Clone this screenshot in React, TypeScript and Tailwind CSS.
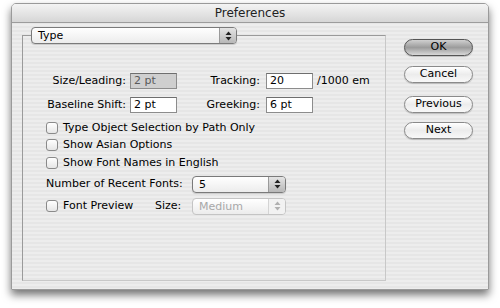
import React from "react";

function Arrows({ disabled }: { disabled?: boolean }) {
  const c = disabled ? "#b0b0b0" : "#222";
  return (
    <svg width="7" height="10" viewBox="0 0 7 10">
      <path d="M3.5 0.5 L6.5 4 L0.5 4 Z" fill={c} />
      <path d="M3.5 9.5 L6.5 6 L0.5 6 Z" fill={c} />
    </svg>
  );
}

function PopUp({ label, width, disabled }: { label: string; width: string; disabled?: boolean }) {
  return (
    <div
      className={`flex h-[17px] items-stretch rounded-[4px] border ${width} ${
        disabled ? "border-[#c4c4c4] text-[#a8a8a8]" : "border-[#7a7a7a] text-black shadow-[0_1px_1px_rgba(0,0,0,0.15)]"
      } bg-gradient-to-b from-white to-[#ececec]`}
    >
      <span className="flex-1 pl-[6px] leading-[15px]">{label}</span>
      <span
        className={`flex w-[17px] items-center justify-center rounded-r-[3px] border-l ${
          disabled ? "border-[#d4d4d4] bg-[#f2f2f2]" : "border-[#9a9a9a] bg-gradient-to-b from-[#e4e4e4] to-[#b8b8b8]"
        }`}
      >
        <Arrows disabled={disabled} />
      </span>
    </div>
  );
}

function Field({ value, width, disabled }: { value: string; width: string; disabled?: boolean }) {
  return (
    <div
      className={`h-[16px] ${width} border border-[#8c8c8c] border-t-[#6e6e6e] pl-[3px] leading-[14px] ${
        disabled ? "bg-[#cfcfcf] text-[#5a5a5a]" : "bg-white text-black"
      }`}
    >
      {value}
    </div>
  );
}

function Check({ label }: { label: string }) {
  return (
    <div className="flex h-[17.5px] items-center">
      <span className="h-[12px] w-[12px] rounded-[3px] border border-[#8a8a8a] bg-gradient-to-b from-white to-[#e6e6e6]" />
      <span className="ml-[5px]">{label}</span>
    </div>
  );
}

function Button({ label, primary }: { label: string; primary?: boolean }) {
  return (
    <div
      className={`flex h-[17px] w-[69px] items-center justify-center rounded-full border ${
        primary
          ? "border-[#555] bg-gradient-to-b from-[#d0d0d0] via-[#9c9c9c] to-[#d8d8d8]"
          : "border-[#8a8a8a] bg-gradient-to-b from-white via-[#ececec] to-[#f8f8f8]"
      } shadow-[0_1px_1px_rgba(0,0,0,0.2)]`}
    >
      {label}
    </div>
  );
}

export default function App() {
  return (
    <div className="h-[308px] w-[500px] overflow-hidden bg-white pl-[11px] pt-[3px] font-['DejaVu_Sans',sans-serif] text-[11px] text-black">
      <div className="flex h-[287px] w-[478px] flex-col overflow-hidden rounded-t-[5px] border border-[#9a9a9a] bg-[repeating-linear-gradient(180deg,#ededed_0px,#ededed_2px,#e6e6e6_2px,#e6e6e6_4px)] shadow-[0_5px_8px_rgba(0,0,0,0.55)]">
        {/* title bar */}
        <div className="flex h-[19px] shrink-0 items-center justify-center border-b border-[#9c9c9c] bg-gradient-to-b from-[#f4f4f4] to-[#d6d6d6] text-[12px] text-[#222]">
          Preferences
        </div>

        <div className="flex flex-1">
          {/* left group */}
          <div className="flex flex-col pl-[10px] pt-[4px]">
            <div className="relative z-10 ml-[9px]">
              <PopUp label="Type" width="w-[206px]" />
            </div>
            <div className="-mt-[9px] h-[246px] w-[364px] border border-[#9a9a9a] border-r-[#c8c8c8] border-b-[#c8c8c8] pt-[37px]">
              <div className="flex items-center">
                <span className="w-[103px] text-right">Size/Leading:</span>
                <span className="ml-[4px]">
                  <Field value="2 pt" width="w-[47px]" disabled />
                </span>
                <span className="w-[83px] text-right">Tracking:</span>
                <span className="ml-[6px]">
                  <Field value="20" width="w-[47px]" />
                </span>
                <span className="ml-[4px]">/1000 em</span>
              </div>
              <div className="mt-[7px] flex items-center">
                <span className="w-[103px] text-right">Baseline Shift:</span>
                <span className="ml-[4px]">
                  <Field value="2 pt" width="w-[47px]" />
                </span>
                <span className="w-[83px] text-right">Greeking:</span>
                <span className="ml-[6px]">
                  <Field value="6 pt" width="w-[47px]" />
                </span>
              </div>

              <div className="ml-[23px] mt-[6px] flex flex-col">
                <Check label="Type Object Selection by Path Only" />
                <Check label="Show Asian Options" />
                <Check label="Show Font Names in English" />
              </div>

              <div className="ml-[23px] mt-[4px] flex items-center">
                <span className="w-[146px]">Number of Recent Fonts:</span>
                <PopUp label="5" width="w-[94px]" />
              </div>
              <div className="ml-[23px] mt-[5px] flex items-center">
                <span className="h-[12px] w-[12px] rounded-[3px] border border-[#8a8a8a] bg-gradient-to-b from-white to-[#e6e6e6]" />
                <span className="ml-[5px] w-[92px]">Font Preview</span>
                <span className="w-[37px]">Size:</span>
                <PopUp label="Medium" width="w-[94px]" disabled />
              </div>
            </div>
          </div>

          {/* right buttons */}
          <div className="ml-[18px] flex flex-col pt-[16px]">
            <Button label="OK" primary />
            <div className="mt-[10px]">
              <Button label="Cancel" />
            </div>
            <div className="mt-[13px]">
              <Button label="Previous" />
            </div>
            <div className="mt-[9px]">
              <Button label="Next" />
            </div>
          </div>
        </div>
      </div>
    </div>
  );
}
